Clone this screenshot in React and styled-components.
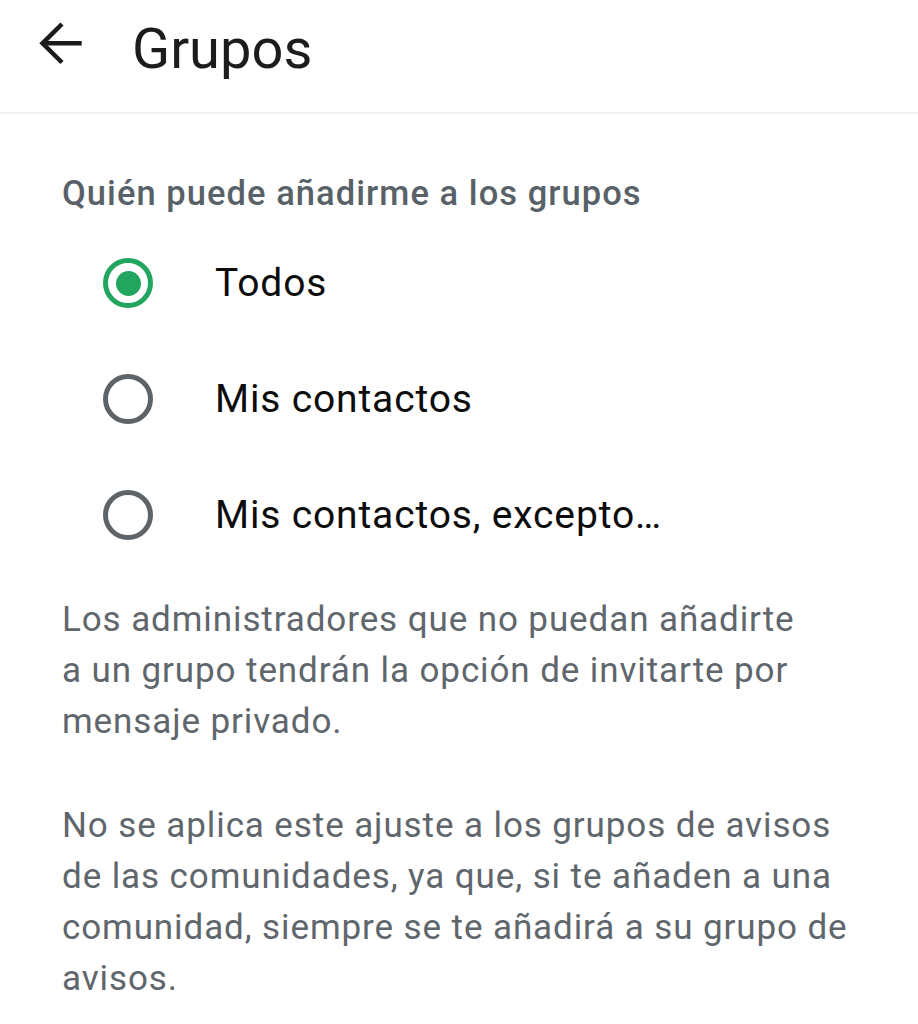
import React from "react";
import styled, { createGlobalStyle } from "styled-components";

const Global = createGlobalStyle`
  html, body { margin: 0; padding: 0; background: #ffffff; }
  body { font-family: Roboto, "Noto Sans", sans-serif; -webkit-font-smoothing: antialiased; }
`;

const Page = styled.div`
  width: 918px;
  min-height: 1024px;
  background: #ffffff;
  display: flex;
  flex-direction: column;
`;

const Header = styled.header`
  height: 114px;
  display: flex;
  align-items: flex-start;
  gap: 49px;
  padding: 16px 0 0 39px;
  box-sizing: border-box;
  border-bottom: 2px solid #f2f2f2;
`;

const BackButton = styled.button`
  border: 0;
  background: none;
  padding: 0;
  margin-top: 5px;
  width: 44px;
  height: 44px;
  display: flex;
  color: #1b1b1b;
`;

const Title = styled.h1`
  margin: 0;
  font-size: 56px;
  line-height: 66px;
  font-weight: 400;
  color: #1b1c1e;
`;

const Content = styled.main`
  padding: 55px 62px 0 62px;
  display: flex;
  flex-direction: column;
`;

const SectionTitle = styled.h2`
  margin: 0 0 8px 0;
  font-size: 34.5px;
  line-height: 48px;
  font-weight: 500;
  letter-spacing: 1.05px;
  color: #596168;
`;

const Options = styled.div`
  display: flex;
  flex-direction: column;
`;

const Option = styled.label`
  height: 116px;
  display: flex;
  align-items: center;
  gap: 62px;
  padding-left: 41px;
`;

const Radio = styled.span`
  width: 50px;
  height: 50px;
  flex: none;
  box-sizing: border-box;
  border-radius: 50%;
  border: 5px solid ${(p) => (p.$checked ? "#22a55f" : "#5e6367")};
  display: flex;
  align-items: center;
  justify-content: center;
  &::after {
    content: "";
    width: 25px;
    height: 25px;
    border-radius: 50%;
    background: #22a55f;
    display: ${(p) => (p.$checked ? "block" : "none")};
  }
`;

const OptionLabel = styled.span`
  font-size: 39px;
  letter-spacing: 0.85px;
  color: #0c0c0c;
`;

const Note = styled.p`
  margin: ${(p) => p.$top}px 0 0 0;
  font-size: 35px;
  line-height: 51px;
  letter-spacing: 0.9px;
  color: #5f666c;
`;

const options = [
  { label: "Todos", checked: true },
  { label: "Mis contactos", checked: false },
  { label: "Mis contactos, excepto…", checked: false },
];

export default function App() {
  return (
    <Page>
      <Global />
      <Header>
        <BackButton aria-label="Atrás">
          <svg width="44" height="44" viewBox="0 0 44 44" fill="none" stroke="currentColor" strokeWidth="4.5">
            <path d="M3 22.3H42.7" strokeLinecap="butt" />
            <path d="M23 3L3.5 22.3L23 41.5" strokeLinejoin="miter" strokeLinecap="butt" />
          </svg>
        </BackButton>
        <Title>Grupos</Title>
      </Header>
      <Content>
        <SectionTitle>Quién puede añadirme a los grupos</SectionTitle>
        <Options>
          {options.map((o) => (
            <Option key={o.label}>
              <Radio $checked={o.checked} />
              <OptionLabel>{o.label}</OptionLabel>
            </Option>
          ))}
        </Options>
        <Note $top={21}>
          Los administradores que no puedan añadirte
          <br />a un grupo tendrán la opción de invitarte por
          <br />mensaje privado.
        </Note>
        <Note $top={53}>
          No se aplica este ajuste a los grupos de avisos
          <br />de las comunidades, ya que, si te añaden a una
          <br />comunidad, siempre se te añadirá a su grupo de
          <br />avisos.
        </Note>
      </Content>
    </Page>
  );
}
